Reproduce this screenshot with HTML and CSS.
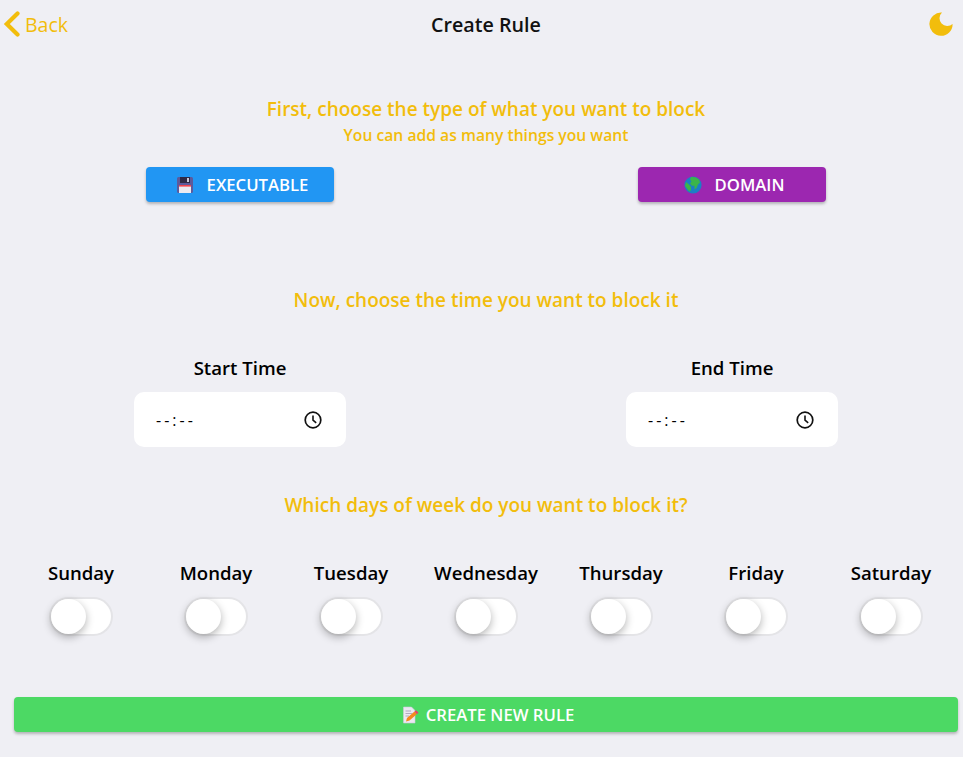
FILE: index.html

```html
<!DOCTYPE html>
<html lang="en">
<head>
   <meta charset="utf-8"/>
   <meta name="viewport" content="width=device-width, initial-scale=1" />
   <title>Create Rule</title>
   <link rel="stylesheet" href="styles.css">
</head>
<body>
<div class="page">

   <!--top bar-->
   <header class="navbar">
      <a class="back">
         <svg class="back-icon" width="20" height="26" viewBox="0 0 20 26"><path d="M14.5 2.5 L3.8 13 L14.5 23.5" fill="none" stroke="#f2bd0c" stroke-width="4.2" stroke-linecap="round" stroke-linejoin="miter"/></svg>
         <span>Back</span>
      </a>
      <div class="nav-title">Create Rule</div>
      <svg class="moon" width="24" height="24" viewBox="0 0 24 24"><path d="M13 .6 A11.6 11.6 0 1 0 23.6 12 A7.4 7.4 0 0 1 13 .6 Z" fill="#f2bd0c"/></svg>
   </header>

   <!--what to block-->
   <h2 class="step-title first">First, choose the type of what you want to block</h2>
   <p class="step-sub">You can add as many things you want</p>
   <div class="two-cols types">
      <div class="col">
         <button class="btn btn-blue">
            <svg class="emoji" width="18" height="18" viewBox="0 0 18 18">
               <path d="M1 2.5 A1.5 1.5 0 0 1 2.5 1 H15.5 A1.5 1.5 0 0 1 17 2.5 V15.5 A1.5 1.5 0 0 1 15.5 17 H2.5 A1.5 1.5 0 0 1 1 15.5 Z" fill="#5c5a9c"/>
               <rect x="4" y="1" width="10" height="6" fill="#2f2a45"/>
               <rect x="11" y="2" width="2" height="4" fill="#c8c8d8"/>
               <rect x="3" y="9" width="12" height="8" fill="#eceaf0"/>
               <rect x="3" y="9" width="12" height="1.6" fill="#f0444e"/>
            </svg>
            <span>EXECUTABLE</span>
         </button>
      </div>
      <div class="col">
         <button class="btn btn-purple">
            <svg class="emoji" width="18" height="18" viewBox="0 0 18 18">
               <circle cx="9" cy="9" r="8.6" fill="#1c7fc4"/>
               <path d="M7 1 C10 .6 13 1.4 15 3.4 L16 6.5 L14 8.5 L12.5 12 L10.5 13.5 L10.5 10 L7.5 9.5 L6 7.5 L7.5 5.5 L6 3.5 Z" fill="#3bb54a"/>
               <path d="M2 6 L5 8.5 L7 11 L7 14.5 L5 15.5 L3 12.5 L1 10 Z" fill="#3bb54a"/>
            </svg>
            <span>DOMAIN</span>
         </button>
      </div>
   </div>

   <!--time range-->
   <h2 class="step-title time-title">Now, choose the time you want to block it</h2>
   <div class="two-cols times">
      <div class="col">
         <div class="field-label">Start Time</div>
         <div class="time-box">
            <span class="time-value">--:--</span>
            <svg width="20" height="20" viewBox="0 0 20 20"><circle cx="10" cy="10" r="7.8" fill="none" stroke="#111" stroke-width="1.7"/><path d="M10 5.6 V10.2 L13.2 12.8" fill="none" stroke="#111" stroke-width="1.6"/></svg>
         </div>
      </div>
      <div class="col">
         <div class="field-label">End Time</div>
         <div class="time-box">
            <span class="time-value">--:--</span>
            <svg width="20" height="20" viewBox="0 0 20 20"><circle cx="10" cy="10" r="7.8" fill="none" stroke="#111" stroke-width="1.7"/><path d="M10 5.6 V10.2 L13.2 12.8" fill="none" stroke="#111" stroke-width="1.6"/></svg>
         </div>
      </div>
   </div>

   <!--days of week-->
   <h2 class="step-title days-title">Which days of week do you want to block it?</h2>
   <div class="days">
      <div class="day"><div class="field-label">Sunday</div><div class="toggle"><div class="knob"></div></div></div>
      <div class="day"><div class="field-label">Monday</div><div class="toggle"><div class="knob"></div></div></div>
      <div class="day"><div class="field-label">Tuesday</div><div class="toggle"><div class="knob"></div></div></div>
      <div class="day"><div class="field-label">Wednesday</div><div class="toggle"><div class="knob"></div></div></div>
      <div class="day"><div class="field-label">Thursday</div><div class="toggle"><div class="knob"></div></div></div>
      <div class="day"><div class="field-label">Friday</div><div class="toggle"><div class="knob"></div></div></div>
      <div class="day"><div class="field-label">Saturday</div><div class="toggle"><div class="knob"></div></div></div>
   </div>

   <button class="btn btn-green">
      <svg class="emoji-small" width="17" height="18" viewBox="0 0 17 18">
         <path d="M1.5 1 H9.5 L13 4.5 V17 H1.5 Z" fill="#ece8f2" stroke="#cfc8dc" stroke-width=".6"/>
         <path d="M3.5 5 H9 M3.5 7.5 H10 M3.5 10 H7" stroke="#a9a3bb" stroke-width=".9"/>
         <path d="M4 15.5 L5 12 L12.5 5.5 L15 8 L7.5 14.5 Z" fill="#f58a1f"/>
         <path d="M12.5 5.5 L14 4.2 L16.5 6.8 L15 8 Z" fill="#f0386b"/>
      </svg>
      <span>CREATE NEW RULE</span>
   </button>

</div>
</body>
</html>
```

FILE: styles.css

```css
/* page */
html, body {
   margin: 0;
   overflow: hidden;
   height: 100%;
}

body {
   background-color: #efeff4;
   color: #000;
   font-family: "Open Sans", "Noto Sans", sans-serif;
}

.page {
   width: 972px;
}

/* top bar */
.navbar {
   height: 50px;
   display: flex;
   align-items: center;
   justify-content: space-between;
   position: relative;
   padding: 0 10px 2px 3px;
   box-sizing: border-box;
   width: 963px;
}

.back {
   display: flex;
   align-items: center;
   gap: 2px;
   color: #f2bd0c;
   font-size: 19.5px;
}

.nav-title {
   position: absolute;
   left: 0;
   width: 972px;
   text-align: center;
   font-size: 19.7px;
   font-weight: 600;
   color: #111;
}

/* step headings */
.step-title {
   margin: 0;
   text-align: center;
   color: #f2bd0c;
   font-size: 19px;
   font-weight: 600;
   line-height: 24px;
}

.step-title.first {
   margin-top: 47px;
}

.step-sub {
   margin: 4px 0 0;
   text-align: center;
   color: #f2bd0c;
   font-size: 15.7px;
   font-weight: 600;
   line-height: 20px;
}

.time-title {
   margin-top: 86px;
}

.days-title {
   margin-top: 46px;
}

/* two columns */
.two-cols {
   display: flex;
   justify-content: space-between;
   padding: 0 134px;
}

.col {
   width: 212px;
   display: flex;
   flex-direction: column;
   align-items: center;
}

.types {
   margin-top: 22px;
}

.times {
   margin-top: 44px;
}

/* buttons */
.btn {
   display: flex;
   align-items: center;
   justify-content: center;
   height: 35px;
   border: 0;
   border-radius: 4px;
   color: #fff;
   font-family: inherit;
   font-size: 16.7px;
   font-weight: 600;
   box-shadow: 0 2px 3px rgba(0, 0, 0, .25);
   padding: 0 0 0 4px;
}

.btn-blue, .btn-purple {
   width: 188px;
   gap: 13px;
}

.btn-blue { background: #2196f3; }
.btn-purple { background: #9c27b0; }

.btn-green {
   background: #4cd964;
   width: 944px;
   margin: 63px 0 0 14px;
   gap: 7px;
}

/* time inputs */
.field-label {
   font-size: 18.6px;
   font-weight: 600;
   line-height: 24px;
   color: #000;
}

.time-box {
   width: 212px;
   height: 55px;
   margin-top: 12px;
   background: #fff;
   border-radius: 10px;
   display: flex;
   align-items: center;
   justify-content: space-between;
   box-sizing: border-box;
   padding: 0 23px 0 22px;
}

.time-value {
   font-size: 16px;
   letter-spacing: 3px;
   color: #000;
}

/* days */
.days {
   display: grid;
   grid-template-columns: repeat(7, 135px);
   padding: 0 13.5px;
   margin-top: 44px;
}

.day {
   display: flex;
   flex-direction: column;
   align-items: center;
}

.toggle {
   width: 60px;
   height: 35px;
   margin-top: 14px;
   background: #fff;
   border-radius: 18px;
   box-shadow: 0 0 0 2px #e4e4e7;
   position: relative;
}

.knob {
   position: absolute;
   left: 0;
   top: 0;
   width: 35px;
   height: 35px;
   border-radius: 50%;
   background: #fff;
   box-shadow: 0 3px 8px rgba(0, 0, 0, .3);
}
```
